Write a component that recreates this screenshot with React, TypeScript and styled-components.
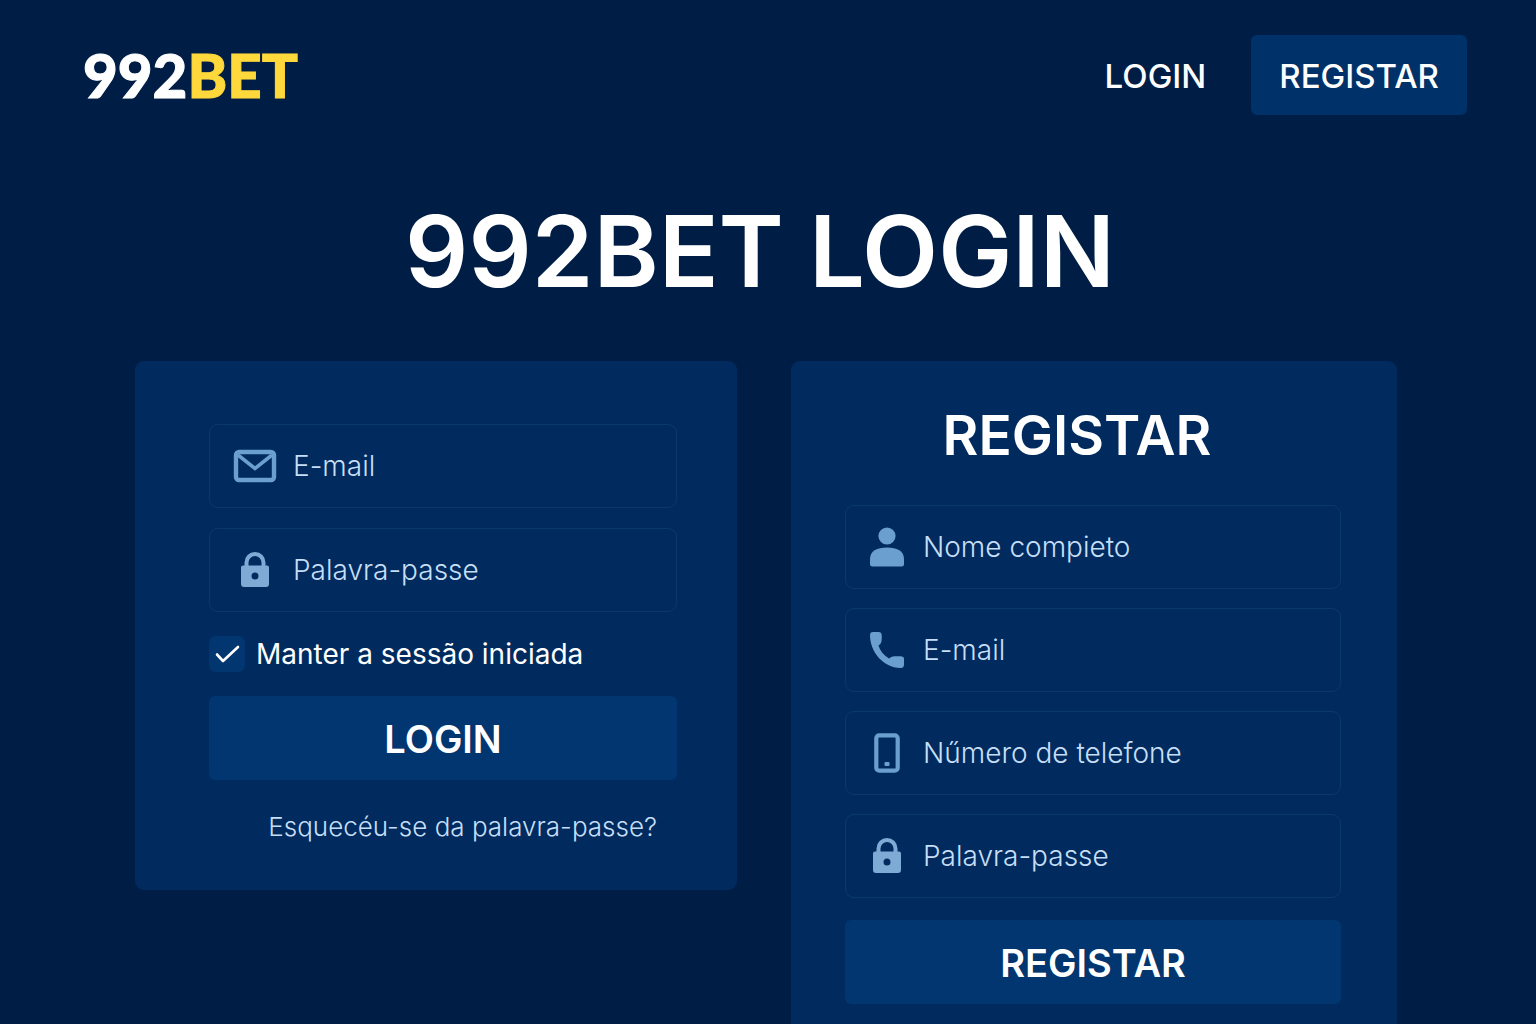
import React, { useId } from "react";
import styled, { createGlobalStyle } from "styled-components";

const color = {
  page: "#001e45",
  card: "#012b5e",
  action: "#013671",
  headerAction: "#003168",
  line: "#0a396b",
  text: "#ffffff",
  muted: "#c6dff7",
  icon: "#6a9fd0",
  iconSoft: "#7eabd6",
  brand: "#ffd93b",
};

const GlobalStyle = createGlobalStyle`
  *, *::before, *::after { box-sizing: border-box; }
  body {
    margin: 0;
    background: ${color.page};
    color: ${color.text};
    font-family: Inter, "Noto Sans", sans-serif;
  }
  h1, h2 { margin: 0; }
`;

const Header = styled.header`
  display: flex;
  align-items: center;
  justify-content: space-between;
  padding: 35px 69px 0 83px;
`;

const Logo = styled.a`
  color: ${color.text};
  font-family: Lato, sans-serif;
  font-size: 60px;
  line-height: 80px;
  font-weight: 900;
  text-decoration: none;
  -webkit-text-stroke: 1px currentColor;
`;

const LogoAccent = styled.span`
  color: ${color.brand};
`;

const Nav = styled.nav`
  display: flex;
  align-items: center;
  gap: 45px;
`;

const NavLink = styled.a<{ $filled?: boolean }>`
  padding: ${(p) => (p.$filled ? "2px 28px 0" : "2px 0 0")};
  border-radius: 6px;
  background: ${(p) => (p.$filled ? color.headerAction : "transparent")};
  color: ${color.text};
  font-size: 33px;
  line-height: 78px;
  font-weight: 500;
  text-decoration: none;
`;

const Title = styled.h1`
  padding: 76px 16px 0 0;
  font-size: 99px;
  line-height: 120px;
  font-weight: 600;
  text-align: center;
`;

const Panels = styled.main`
  display: grid;
  grid-template-columns: minmax(0, 301fr) minmax(0, 303fr);
  align-items: start;
  gap: 54px;
  padding: 50px 139px 0 135px;
`;

const LoginCard = styled.form`
  display: flex;
  flex-direction: column;
  padding: 63px 60px 44px 74px;
  border-radius: 9px;
  background: ${color.card};
`;

const RegisterCard = styled.form`
  display: flex;
  flex-direction: column;
  gap: 22px;
  padding: 40px 56px 20px 54px;
  border-radius: 9px 9px 0 0;
  background: ${color.card};
`;

const CardTitle = styled.h2`
  padding: 0 32px 13px 0;
  font-size: 55px;
  line-height: 69px;
  font-weight: 600;
  text-align: center;
`;

const Fields = styled.div<{ $gap: number }>`
  display: flex;
  flex-direction: column;
  gap: ${(p) => p.$gap}px;
`;

const FieldBox = styled.label<{ $wide?: boolean }>`
  display: flex;
  align-items: center;
  gap: ${(p) => (p.$wide ? 16 : 18)}px;
  height: 84px;
  padding: 0 23px;
  border: 1px solid ${color.line};
  border-radius: 9px;
`;

const IconSlot = styled.span<{ $wide?: boolean }>`
  display: flex;
  flex: none;
  justify-content: center;
  width: ${(p) => (p.$wide ? 44 : 36)}px;
  color: ${color.icon};
`;

const FieldInput = styled.input`
  flex: 1;
  width: 100%;
  min-width: 0;
  padding: 0;
  border: 0;
  outline: 0;
  background: transparent;
  color: ${color.text};
  font: 350 28px/40px Inter, "Noto Sans", sans-serif;
  &::placeholder { color: ${color.muted}; opacity: 1; }
`;

const Remember = styled.label`
  display: flex;
  align-items: center;
  gap: 11px;
  margin: 22px 0;
  font-size: 28px;
  line-height: 40px;
`;

const CheckSlot = styled.span`
  display: grid;
  width: 36px;
  height: 36px;
  > * { grid-area: 1 / 1; }
`;

const CheckInput = styled.input`
  appearance: none;
  width: 36px;
  height: 36px;
  margin: 0;
  border-radius: 7px;
  background: ${color.action};
  & + svg { visibility: hidden; pointer-events: none; }
  &:checked + svg { visibility: visible; }
`;

const SubmitButton = styled.button`
  height: 84px;
  padding: 2px 0 0;
  border: 0;
  border-radius: 6px;
  background: ${color.action};
  color: ${color.text};
  font: 600 38px/48px Inter, "Noto Sans", sans-serif;
`;

const ForgotLink = styled.a`
  align-self: flex-end;
  margin: 28px 20px 0 0;
  color: ${color.muted};
  font-size: 26px;
  font-weight: 300;
  line-height: 38px;
  text-decoration: none;
`;

const MailIcon = () => (
  <svg width="44" height="34" viewBox="0 0 44 34" fill="none" stroke="currentColor" aria-hidden="true">
    <rect x="3" y="3" width="38" height="28" rx="3" strokeWidth="4.4" />
    <path d="M5 6 L22 19.5 L39 6" strokeWidth="3.6" />
  </svg>
);

const LockIcon = () => (
  <svg width="28" height="36" viewBox="0 0 28 36" color={color.iconSoft} aria-hidden="true">
    <path d="M5.5 15 V10.5 a8.5 8.5 0 0 1 17 0 V15" fill="none" stroke="currentColor" strokeWidth="4" />
    <path fillRule="evenodd" fill="currentColor" d="M2 13.5 H26 a2 2 0 0 1 2 2 V32 a3 3 0 0 1-3 3 H3 a3 3 0 0 1-3-3 V15.5 a2 2 0 0 1 2-2 Z M14 20.5 a3.5 3.5 0 1 0 0 7 a3.5 3.5 0 1 0 0-7 Z" />
  </svg>
);

const PersonIcon = () => (
  <svg width="34" height="40" viewBox="0 0 34 40" fill="currentColor" aria-hidden="true">
    <circle cx="17" cy="9" r="8.6" />
    <path d="M0 37 V32 C0 24 7 20.5 17 20.5 S34 24 34 32 V37 a2.5 2.5 0 0 1-2.5 2.5 H2.5 A2.5 2.5 0 0 1 0 37 Z" />
  </svg>
);

const PhoneIcon = () => (
  <svg width="34" height="38" viewBox="0 0 34 38" fill="currentColor" aria-hidden="true">
    <path d="M3 1 H8.5 Q11.5 1 11.7 4 Q12 7.5 11.5 10.5 Q11 13 8.5 14.5 C10 20 13.5 24 19 27.5 Q21 25.5 24 25.2 H30.5 Q34 25.2 34 28 V33.5 Q34 37 30.5 37 C13 36.5 0 21 0 4 Q0 1 3 1 Z" />
  </svg>
);

const MobileIcon = () => (
  <svg width="26" height="40" viewBox="0 0 26 40" aria-hidden="true">
    <rect x="2.3" y="2.3" width="21.4" height="35.4" rx="3" fill="none" stroke="currentColor" strokeWidth="4.2" />
    <rect x="10.5" y="29" width="5" height="4" rx="1" fill="currentColor" />
  </svg>
);

const CheckIcon = () => (
  <svg width="36" height="36" viewBox="0 0 36 36" fill="none" stroke="#fff" strokeWidth="2.6" strokeLinecap="round" strokeLinejoin="round" aria-hidden="true">
    <path d="M8 18.5 L14 25 L29 11" />
  </svg>
);

type FieldProps = {
  icon: React.ReactNode;
  label: string;
  type?: string;
  wide?: boolean;
};

function Field({ icon, label, type = "text", wide }: FieldProps) {
  const id = useId();
  return (
    <FieldBox htmlFor={id} $wide={wide}>
      <IconSlot $wide={wide}>{icon}</IconSlot>
      <FieldInput id={id} type={type} placeholder={label} aria-label={label} />
    </FieldBox>
  );
}

export default function App() {
  return (
    <>
      <GlobalStyle />
      <Header>
        <Logo href="#">
          992<LogoAccent>BET</LogoAccent>
        </Logo>
        <Nav>
          <NavLink href="#login">LOGIN</NavLink>
          <NavLink href="#registar" $filled>REGISTAR</NavLink>
        </Nav>
      </Header>
      <Title>992BET LOGIN</Title>
      <Panels>
        <LoginCard id="login">
          <Fields $gap={20}>
            <Field wide icon={<MailIcon />} label="E-mail" type="email" />
            <Field wide icon={<LockIcon />} label="Palavra-passe" type="password" />
          </Fields>
          <Remember htmlFor="remember">
            <CheckSlot>
              <CheckInput id="remember" type="checkbox" defaultChecked />
              <CheckIcon />
            </CheckSlot>
            Manter a sessão iniciada
          </Remember>
          <SubmitButton type="button">LOGIN</SubmitButton>
          <ForgotLink href="#recuperar">Esquecéu-se da palavra-passe?</ForgotLink>
        </LoginCard>
        <RegisterCard id="registar">
          <CardTitle>REGISTAR</CardTitle>
          <Fields $gap={19}>
            <Field icon={<PersonIcon />} label="Nome compieto" />
            <Field icon={<PhoneIcon />} label="E-mail" type="email" />
            <Field icon={<MobileIcon />} label="Nűmero de telefone" type="tel" />
            <Field icon={<LockIcon />} label="Palavra-passe" type="password" />
          </Fields>
          <SubmitButton type="button">REGISTAR</SubmitButton>
        </RegisterCard>
      </Panels>
    </>
  );
}
